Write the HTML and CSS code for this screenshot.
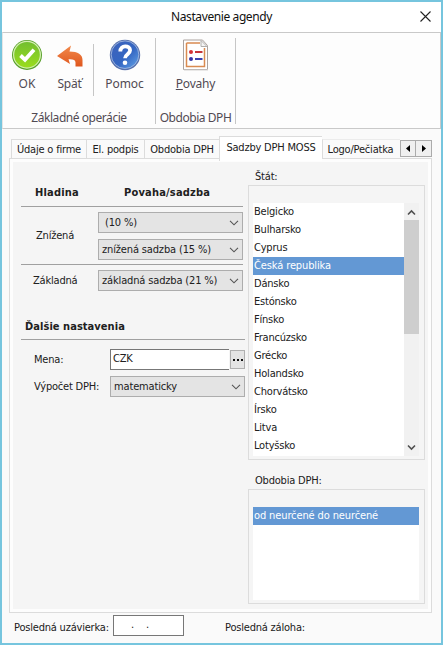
FILE: index.html
```html
<!DOCTYPE html>
<html lang="sk">
<head>
    <meta charset="UTF-8">
    <meta name="viewport" content="width=device-width, initial-scale=1.0">
    <title>Nastavenie agendy</title>
    <link rel="stylesheet" href="styles.css">
</head>
<body>
    <div class="window">
        <header class="titlebar">
            <h1>Nastavenie agendy</h1>
            <button class="close" type="button" aria-label="Zavrieť">
                <svg width="11" height="11" viewBox="0 0 11 11"><path d="M.5 .5l10 10M10.500 .5l-10 10" stroke="#222" stroke-width="1.100"/></svg>
            </button>
        </header>

        <div class="ribbon">
            <section class="group group-main">
                <div class="tools">
                    <button class="tool tool-ok" type="button">
                        <svg width="32" height="32" viewBox="0 0 32 32">
                            <defs>
                                <linearGradient id="green" x1="0" y1="0" x2="0" y2="1"><stop offset="0" stop-color="#71be30"/><stop offset="1" stop-color="#9bdd1c"/></linearGradient>
                            </defs>
                            <circle cx="16" cy="16" r="15" fill="#58a02b"/>
                            <circle cx="16" cy="15.700" r="13.400" fill="url(#green)" stroke="#d3efb0" stroke-width="1.200"/>
                            <path d="M9.500 16.500l4.500 4.200 9-10" fill="none" stroke="#fff" stroke-width="3.800"/>
                        </svg>
                        <span>OK</span>
                    </button>
                    <button class="tool tool-back" type="button">
                        <svg width="32" height="32" viewBox="0 0 32 32">
                            <defs>
                                <linearGradient id="orange" x1="0" y1="0" x2="0" y2="1"><stop offset="0" stop-color="#f28a4c"/><stop offset="1" stop-color="#df571e"/></linearGradient>
                            </defs>
                            <path d="M3 17L17 6.500l-1.500 6C24 12.500 28.500 15.500 28.500 21v6.500h-7V23.500c0-3-2.500-3.500-7-3.300L16 25z" fill="url(#orange)"/>
                        </svg>
                        <span>Späť</span>
                    </button>
                    <i class="separator"></i>
                    <button class="tool tool-help" type="button">
                        <svg width="32" height="32" viewBox="0 0 32 32">
                            <defs>
                                <linearGradient id="blue" x1="0" y1="0" x2="1" y2="1"><stop offset="0" stop-color="#3d62bb"/><stop offset=".55" stop-color="#3466c2"/><stop offset="1" stop-color="#65a5e8"/></linearGradient>
                            </defs>
                            <circle cx="16" cy="16" r="15.200" fill="#5570ad"/>
                            <circle cx="16" cy="15.700" r="13.800" fill="url(#blue)" stroke="#a9bfe5" stroke-width=".8"/>
                            <path d="M11.300 12.500c0-7 9.800-6.500 9.800-1.200 0 4-5.100 3.800-5.100 8" fill="none" stroke="#fff" stroke-width="3.800"/>
                            <circle cx="16" cy="23.800" r="2.300" fill="#fff"/>
                        </svg>
                        <span>Pomoc</span>
                    </button>
                </div>
                <h2>Základné operácie</h2>
            </section>
            <section class="group group-dph">
                <div class="tools">
                    <button class="tool tool-types" type="button">
                        <svg width="32" height="32" viewBox="0 0 32 32">
                            <path d="M3.500 1h19l5 5.500V30.500h-24z" fill="#fff" stroke="#aaa29f"/>
                            <path d="M6.500 4h13.500M24.500 9v18.500h-18V4" fill="none" stroke="#d98b51" stroke-width="1.500"/>
                            <path d="M21 1.500v6h6z" fill="#f4f4f4" stroke="#b0aeac"/>
                            <circle cx="11" cy="13" r="2" fill="#d43236"/>
                            <path d="M15 13h7.500" stroke="#c5343a" stroke-width="2"/>
                            <circle cx="11" cy="20" r="2" fill="#3634a5"/>
                            <path d="M15 20h7.500" stroke="#3940ae" stroke-width="2"/>
                            <path d="M4 31h24" stroke="#d5d3d1"/>
                        </svg>
                        <span><u>P</u>ovahy</span>
                    </button>
                </div>
                <h2>Obdobia DPH</h2>
            </section>
        </div>

        <nav class="tabs">
            <a class="tab tab-firm">Údaje o firme</a>
            <a class="tab tab-sign">El. podpis</a>
            <a class="tab tab-period">Obdobia DPH</a>
            <a class="tab tab-moss active">Sadzby DPH MOSS</a>
            <a class="tab tab-logo">Logo/Pečiatka</a>
            <div class="tab-scroll">
                <button type="button"><svg width="4" height="7" viewBox="0 0 4 7"><path d="M4 0v7L0 3.500z"/></svg></button>
                <button type="button"><svg width="4" height="7" viewBox="0 0 4 7"><path d="M0 0v7l4-3.500z"/></svg></button>
            </div>
        </nav>

        <main class="page">
            <div class="settings">
                <div class="rates-head">
                    <b>Hladina</b>
                    <b class="head-rate">Povaha/sadzba</b>
                </div>
                <div class="rates-row">
                    <span class="rate-name">Znížená</span>
                    <div class="rate-fields">
                        <div class="combo"><span class="indent">(10 %)</span><svg width="10" height="6" viewBox="0 0 10 6"><path d="M1 .8l4 4 4-4"/></svg></div>
                        <div class="combo"><span>znížená sadzba (15 %)</span><svg width="10" height="6" viewBox="0 0 10 6"><path d="M1 .8l4 4 4-4"/></svg></div>
                    </div>
                </div>
                <div class="rates-row">
                    <span class="rate-name basic">Základná</span>
                    <div class="rate-fields">
                        <div class="combo"><span>základná sadzba (21 %)</span><svg width="10" height="6" viewBox="0 0 10 6"><path d="M1 .8l4 4 4-4"/></svg></div>
                    </div>
                </div>

                <h3 class="more">Ďalšie nastavenia</h3>
                <div class="field">
                    <label>Mena:</label>
                    <div class="currency"><span class="input">CZK</span><button class="dots" type="button"><i></i><i></i><i></i></button></div>
                </div>
                <div class="field">
                    <label>Výpočet DPH:</label>
                    <div class="combo"><span>matematicky</span><svg width="10" height="6" viewBox="0 0 10 6"><path d="M1 .8l4 4 4-4"/></svg></div>
                </div>
            </div>

            <div class="lists">
                <h4>Štát:</h4>
                <div class="listbox states">
                    <ul>
                        <li>Belgicko</li>
                        <li>Bulharsko</li>
                        <li>Cyprus</li>
                        <li class="selected">Česká republika</li>
                        <li>Dánsko</li>
                        <li>Estónsko</li>
                        <li>Fínsko</li>
                        <li>Francúzsko</li>
                        <li>Grécko</li>
                        <li>Holandsko</li>
                        <li>Chorvátsko</li>
                        <li>Írsko</li>
                        <li>Litva</li>
                        <li>Lotyšsko</li>
                    </ul>
                    <div class="scrollbar">
                        <svg width="9" height="7" viewBox="0 0 9 7"><path d="M1 5.500L4.500 2 8 5.500"/></svg>
                        <div class="thumb"></div>
                        <svg class="down" width="9" height="7" viewBox="0 0 9 7"><path d="M1 1.500L4.500 5 8 1.500"/></svg>
                    </div>
                </div>
                <h4 class="periods-label">Obdobia DPH:</h4>
                <div class="listbox periods">
                    <ul>
                        <li class="selected">od neurčené do neurčené</li>
                    </ul>
                </div>
            </div>
        </main>

        <footer class="status">
            <label class="closing">Posledná uzávierka:</label>
            <div class="date"><span>.</span><span>.</span></div>
            <label class="advance">Posledná záloha:</label>
        </footer>
    </div>
</body>
</html>
```
FILE: styles.css
```css
:root {
    --frame: #76c5de;
    --face: #fafafa;
    --panel: #f5f5f5;
    --line: #dcdcdc;
    --select: #6398d4;
}
* {
    box-sizing: border-box;
}
body {
    margin: 0;
    font-family: "DejaVu Sans Condensed", "DejaVu Sans", sans-serif;
    font-stretch: condensed;
    font-size: 11px;
    line-height: 18px;
    letter-spacing: -0.2px;
    color: #202020;
    white-space: nowrap;
}
h1, h2, h3, h4, ul {
    margin: 0;
    padding: 0;
    font-size: inherit;
    font-weight: normal;
    list-style: none;
}
button {
    padding: 0;
    border: 0;
    background: none;
    font: inherit;
    letter-spacing: inherit;
    color: inherit;
}
svg {
    display: block;
}
.window {
    display: flex;
    flex-direction: column;
    width: 443px;
    height: 645px;
    border: 2px solid var(--frame);
    background: var(--face);
    overflow: hidden;
}

/* title bar */
.titlebar {
    display: grid;
    grid-template-columns: 1fr 32px;
    height: 30px;
    background: #fff;
}
.titlebar h1 {
    padding-left: 32px;
    text-align: center;
    font: 12px/29px "Noto Sans", sans-serif;
    letter-spacing: -0.4px;
    color: #111;
}
.close {
    display: flex;
    justify-content: center;
    padding-top: 9px;
}

/* ribbon */
.ribbon {
    display: flex;
    height: 97px;
    padding-top: 5px;
    border: 1px solid #c9c9c9;
    border-left-color: #e5e5e5;
    background: #fdfdfd;
    font-family: "Noto Sans", sans-serif;
    font-size: 12px;
    letter-spacing: 0;
    color: #514a52;
}
.group {
    height: 86px;
    border-right: 1px solid #c6c6c6;
}
.group-main {
    width: 153px;
}
.group-dph {
    width: 80px;
}
.group h2 {
    margin-top: 13px;
    text-align: center;
    letter-spacing: -0.45px;
}
.tools {
    display: flex;
    height: 58px;
}
.tool {
    display: flex;
    flex-direction: column;
    align-items: center;
    padding-top: 1px;
}
.tool span {
    margin-top: 4px;
}
.tool-ok {
    width: 48px;
}
.tool-back {
    width: 37px;
    letter-spacing: -0.3px;
}
.separator {
    width: 1px;
    height: 52px;
    margin: 6px 0 0 5px;
    background: #c6c6c6;
}
.tool-help {
    width: 61px;
    letter-spacing: -0.1px;
}
.tool-types {
    width: 79px;
    letter-spacing: -0.2px;
}

/* tabs */
.tabs {
    display: flex;
    align-items: flex-end;
    height: 29px;
    padding-left: 9px;
}
.tab {
    height: 19px;
    border: 1px solid var(--line);
    border-right: 0;
    border-bottom: 0;
    text-align: center;
    line-height: 20px;
}
.tab-firm {
    width: 75px;
}
.tab-sign {
    width: 58px;
}
.tab-period {
    width: 75px;
}
.tab-moss {
    width: 103px;
}
.tab-logo {
    width: 78px;
    padding-right: 2px;
    border-top-color: #ececec;
}
.tab.active {
    z-index: 1;
    height: 25px;
    margin-bottom: -3px;
    background: #fff;
    line-height: 21px;
}
.tab-scroll {
    display: flex;
    width: 32px;
    margin-bottom: 1px;
}
.tab-scroll button {
    display: flex;
    align-items: center;
    justify-content: center;
    width: 16px;
    height: 17px;
    border: 1px solid #ababab;
    background: #f0f0f0;
}
.tab-scroll button + button {
    margin-left: -1px;
    width: 17px;
}

/* tab page */
.page {
    display: flex;
    width: 423px;
    height: 455px;
    margin-left: 7px;
    border: 1px solid var(--line);
    background: var(--panel);
    box-shadow: inset 0 0 0 3px #fdfdfd;
}
.settings {
    width: 238px;
    padding: 25px 3px 0 11px;
}
.rates-head {
    display: flex;
    height: 22px;
    padding-left: 14px;
    letter-spacing: 0.2px;
}
.head-rate {
    margin-left: 45px;
}
.rates-row {
    display: flex;
    align-items: center;
    width: 222px;
    padding: 5px 0 4px;
    border-top: 1px solid #a0a0a0;
}
.rate-name {
    width: 77px;
    padding-left: 15px;
}
.rate-name.basic {
    padding-left: 12px;
}
.rate-fields {
    display: grid;
    gap: 6px;
    width: 145px;
}
.combo {
    display: flex;
    align-items: center;
    justify-content: space-between;
    height: 21px;
    padding: 0 3px;
    border: 1px solid #adadad;
    background: #e4e4e4;
    letter-spacing: -0.15px;
}
.combo .indent {
    padding-left: 3px;
}
.combo path {
    fill: none;
    stroke: #555;
    stroke-width: 1.1;
}
.more {
    width: 224px;
    height: 22px;
    margin-top: 23px;
    padding-left: 4px;
    border-bottom: 1px solid #a0a0a0;
    font-weight: bold;
    letter-spacing: 0.05px;
}
.field {
    display: grid;
    grid-template-columns: 76px 135px;
    align-items: center;
    padding-left: 13px;
    margin-top: 6px;
}
.more + .field {
    margin-top: 9px;
}
.currency {
    display: flex;
    align-items: center;
}
.input {
    width: 119px;
    height: 21px;
    padding-left: 2px;
    border: 1px solid #777;
    border-right: 0;
    background: #fff;
}
.dots {
    display: flex;
    align-items: center;
    justify-content: center;
    gap: 2px;
    width: 15px;
    height: 19px;
    margin-left: 1px;
    border: 1px solid #b0b0b0;
    background: #e4e4e4;
}
.dots i {
    width: 2px;
    height: 2px;
    background: #111;
}

/* lists */
.lists {
    width: 176px;
    padding-top: 9px;
}
.lists h4 {
    height: 17px;
    padding-left: 7px;
}
.listbox {
    display: flex;
    width: 177px;
    padding: 14px 5px 3px 4px;
    border: 1px solid var(--line);
}
.states {
    height: 275px;
}
.listbox ul {
    flex: 1;
    padding-top: 3px;
    background: linear-gradient(var(--panel) 3px, #fff 3px);
}
.listbox li {
    height: 18px;
    padding-left: 1px;
}
.listbox .selected {
    background: var(--select);
    color: #fff;
    letter-spacing: -0.12px;
}
.scrollbar {
    display: flex;
    flex-direction: column;
    align-items: center;
    width: 15px;
    margin-top: 3px;
    padding: 6px 0 5px;
    background: #f1f1f1;
}
.scrollbar path {
    fill: none;
    stroke: #505050;
    stroke-width: 1.6;
}
.thumb {
    width: 15px;
    height: 114px;
    margin-top: 4px;
    background: #cecece;
}
.scrollbar .down {
    margin-top: auto;
}
.lists .periods-label {
    margin-top: 12px;
}
.periods {
    height: 115px;
}

/* footer */
.status {
    display: flex;
    padding: 2px 0 0 12px;
    line-height: 25px;
}
.closing {
    width: 99px;
}
.date {
    display: flex;
    gap: 12px;
    width: 71px;
    height: 21px;
    padding-left: 17px;
    border: 1px solid #777;
    background: #fff;
    line-height: 18px;
}
.advance {
    margin-left: 41px;
}
```
